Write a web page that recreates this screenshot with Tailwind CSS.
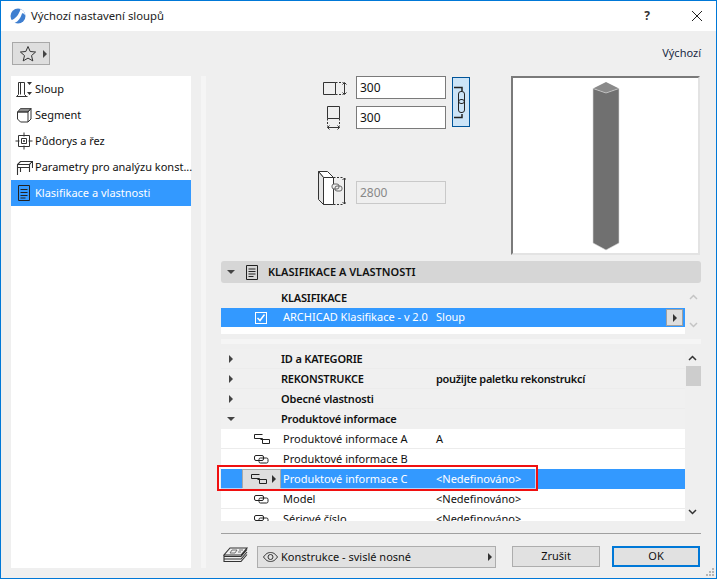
<!DOCTYPE html>
<html lang="en">
<head>
<meta charset="UTF-8">
<script src="https://cdn.jsdelivr.net/npm/@tailwindcss/browser@4"></script>
<title>Výchozí nastavení sloupů</title>
</head>
<body class="overflow-hidden">
<div class="relative w-[717px] h-[579px] flex flex-col border border-[#0078d7] bg-[#efefef] font-['Noto_Sans','Liberation_Sans',sans-serif] text-[11px] text-[#111]">

  <!-- title bar -->
  <div class="h-[30px] bg-white flex items-center shrink-0">
    <svg class="ml-[9px] w-[16px] h-[16px]" viewBox="0 0 16 16"><circle cx="8" cy="8" r="7.500" fill="#3f7fd0"/><path d="M1 12.500C5 11 9 7 10.500 1c2.500 1 4.500 3 4.800 6.500C14 5.500 13 5 12 5.500c-1 3.500-3.500 8-7.500 9.500C3 14.500 2 13.500 1 12.500z" fill="#fff"/></svg>
    <span class="ml-[5px] text-[11.3px] text-[#222]">Výchozí nastavení sloupů</span>
    <span class="ml-auto mr-[41px] text-[12px] font-bold text-[#333]">?</span>
    <svg class="mr-[13px] w-[12px] h-[12px]" viewBox="0 0 12 12"><path d="M1 1l10 10M11 1L1 11" stroke="#222" stroke-width="1" fill="none"/></svg>
  </div>

  <!-- toolbar -->
  <div class="h-[45px] flex items-center justify-between pl-[11px] pr-[15px] shrink-0">
    <div class="w-[38px] h-[23px] bg-[#dedede] border border-[#a8a8a8] flex items-center pl-[6px] gap-[6px]">
      <svg class="w-[18px] h-[18px]" viewBox="0 0 18 18"><path d="M9 1.500l2.200 5 5.400.5-4.100 3.600 1.300 5.300L9 13.100l-4.800 2.800 1.300-5.300L1.400 7l5.400-.5z" fill="none" stroke="#333" stroke-width="1"/></svg>
      <span class="w-0 h-0 border-y-[4px] border-y-transparent border-l-[4px] border-l-[#444]"></span>
    </div>
    <span class="text-[#1a2a44]">Výchozí</span>
  </div>

  <div class="flex flex-1 min-h-0 pl-[10px] pr-[15px] pb-[10px]">
    <!-- left list -->
    <div class="w-[180px] h-[492px] bg-white shrink-0">
      <div class="h-[26px] flex items-center">
        <svg class="ml-[4px] w-[18px] h-[18px] shrink-0" viewBox="0 0 18 18" fill="none" stroke="#333"><path d="M3.500 14.500V2.500h6v12M5.500 2.500v12M1.500 16.500h11M3.500 14.500l-2 2M9.500 14.500l2 2"/><path d="M12 2h5l-2.500 3zM12 12h5l-2.500 3z" fill="#333" stroke="none"/></svg>
        <span class="ml-[2px]">Sloup</span>
      </div>
      <div class="h-[26px] flex items-center">
        <svg class="ml-[4px] w-[18px] h-[18px] shrink-0" viewBox="0 0 18 18" fill="none" stroke="#333"><path d="M2.500 6l3-3.500h10.500L13 6z" fill="#8c8c8c" stroke-width=".8"/><path d="M2.500 6H13v10H5.500l-3-3zM13 6l3-3.500V13l-3 3"/></svg>
        <span class="ml-[2px]">Segment</span>
      </div>
      <div class="h-[26px] flex items-center">
        <svg class="ml-[4px] w-[18px] h-[18px] shrink-0" viewBox="0 0 18 18" fill="none" stroke="#333"><path d="M3.500 3.500h11v11h-11zM6.500 6.500h5v5h-5zM9 .5v4M9 13.500v4M.5 9h4M13.500 9h4M9 8v2M8 9h2"/></svg>
        <span class="ml-[2px]">Půdorys a řez</span>
      </div>
      <div class="h-[26px] flex items-center">
        <svg class="ml-[4px] w-[18px] h-[18px] shrink-0" viewBox="0 0 18 18" fill="none" stroke="#333"><path d="M2.500 17V6.500l3-3h12l-3 3h-12M14.500 6.500V14M2.500 9.500h12M5.500 9.500V14M17.500 3.500V10" stroke-width="1.100"/></svg>
        <span class="ml-[2px] whitespace-nowrap">Parametry pro analýzu konst...</span>
      </div>
      <div class="h-[26px] flex items-center bg-[#3399ff] text-white">
        <svg class="ml-[6px] w-[14px] h-[18px] shrink-0" viewBox="0 0 14 18" fill="none" stroke="#222"><path d="M1.500 1.500h11v15h-11zM3.500 5.500h7M3.500 8.500h7M3.500 11.500h7M3.500 14h5"/></svg>
        <span class="ml-[4px]">Klasifikace a vlastnosti</span>
      </div>
    </div>

    <!-- splitter -->
    <div class="w-[5px] h-[492px] bg-[#f5f5f5] ml-[10px] mr-[15px] shrink-0"></div>

    <!-- right column -->
    <div class="w-[480px] flex flex-col">
      <!-- geometry + preview -->
      <div class="h-[179px] flex shrink-0">
        <div class="w-[225px] shrink-0 flex flex-col items-end">
          <div class="h-[23px] flex items-center">
            <svg class="mr-[9px] w-[24px] h-[16px]" viewBox="0 0 24 16" fill="none" stroke="#333"><path d="M.5 2.500h12v12H.5z"/><path d="M12.500 2.500h8M12.500 14.500h8" stroke-dasharray="2 1.500"/><path d="M21.500 3v11M19.500 4.500l2-2 2 2M19.500 12.500l2 2 2-2"/></svg>
            <div class="w-[90px] h-[23px] bg-white border border-[#7a7a7a] pl-[3px] flex items-center text-[12px] text-[#111]">300</div>
          </div>
          <div class="h-[23px] mt-[7px] flex items-center">
            <svg class="mr-[16px] w-[14px] h-[24px]" viewBox="0 0 14 24" fill="none" stroke="#333"><path d="M1.500 .5h12v12h-12z"/><path d="M1.500 12.500v8M13.500 12.500v8" stroke-dasharray="2 1.500"/><path d="M1.500 21.500h12M3.500 19.500l-2 2 2 2M11.500 19.500l2 2-2 2"/></svg>
            <div class="w-[90px] h-[23px] bg-white border border-[#7a7a7a] pl-[3px] flex items-center text-[12px] text-[#111]">300</div>
          </div>
          <div class="h-[23px] mt-[52px] flex items-center">
            <svg class="mr-[10px] w-[29px] h-[34px] -mt-[10px]" viewBox="0 0 29 34" fill="none" stroke="#333"><path d="M1.500 .5h9l6 6h-10z" fill="#fff"/><path d="M6.500 6.500h10v27h-10z" fill="#fff"/><path d="M1.500 .5v28l5 5v-27z" fill="#e4e4e4"/><path d="M16.500 6.500h10M16.500 33.500h10" stroke-dasharray="2 1.500"/><path d="M27.500 7v26M25.500 9l2-2 2 2M25.500 31l2 2 2-2"/><rect x="15" y="13" width="7" height="5" rx="2" stroke="#666" fill="#eee"/><rect x="18" y="15" width="7" height="5" rx="2" stroke="#666"/></svg>
            <div class="w-[90px] h-[23px] bg-[#efefef] border border-[#c9c9c9] pl-[3px] flex items-center text-[12px] text-[#888]">2800</div>
          </div>
        </div>
        <div class="w-[18px] h-[50px] mt-px ml-[6px] bg-[#cce4f7] border border-[#005499] shrink-0">
          <svg class="w-[16px] h-[48px]" viewBox="0 0 16 48" fill="none" stroke="#222"><path d="M1 9.500h8V13M1 39.500h8V36" stroke-width="1.500"/><rect x="5.500" y="13.500" width="6" height="12" rx="2.500"/><rect x="5.500" y="21.500" width="6" height="13" rx="2.500"/></svg>
        </div>
        <div class="ml-[41px] w-[189px] h-[179px] bg-white border-2 border-[#e3e3e3] border-t-[#7a7a7a] border-l-[#7a7a7a] flex justify-center items-start shrink-0">
          <svg class="mt-[3px] w-[28px] h-[170px]" viewBox="0 0 28 170"><path d="M1 7.500L14 1l13 6.500L14 12z" fill="#8a8a8a"/><path d="M1 7.500L14 12l13-4.500V162l-13 7-13-7z" fill="#707070" stroke="#d8d8d8" stroke-width=".6"/></svg>
        </div>
      </div>

      <!-- section header -->
      <div class="mt-[6px] h-[22px] bg-[#d6d6d6] rounded-[3px] flex items-center shrink-0">
        <span class="ml-[6px] w-0 h-0 border-x-[4px] border-x-transparent border-t-[4px] border-t-[#444]"></span>
        <svg class="ml-[11px] w-[12px] h-[15px]" viewBox="0 0 12 15" fill="none" stroke="#222"><path d="M.5 .5h11v14H.5zM2.500 4h7M2.500 6.500h7M2.500 9h7M2.500 11.500h5"/></svg>
        <span class="ml-[10px] font-semibold">KLASIFIKACE A VLASTNOSTI</span>
      </div>

      <!-- classification list -->
      <div class="mt-[5px] h-[46px] flex shrink-0">
        <div class="w-[464px]">
          <div class="h-[20px] flex items-center pl-[60px] font-semibold tracking-[-0.2px]">KLASIFIKACE</div>
          <div class="h-[19px] bg-[#3399ff] text-white flex items-center relative whitespace-nowrap">
            <span class="ml-[34px] w-[12px] h-[12px] border border-white flex items-center justify-center shrink-0">
              <svg class="w-[10px] h-[10px]" viewBox="0 0 10 10" fill="none" stroke="#fff" stroke-width="1.500"><path d="M1.500 5l2.500 2.500 4.500-6"/></svg>
            </span>
            <span class="ml-[16px] w-[153px] shrink-0">ARCHICAD Klasifikace - v 2.0</span>
            <span>Sloup</span>
            <span class="absolute right-[2px] top-px w-[17px] h-[17px] bg-[#dedede] border border-[#a0a0a0] flex items-center justify-center">
              <span class="w-0 h-0 border-y-[4px] border-y-transparent border-l-[4px] border-l-[#333]"></span>
            </span>
          </div>
          <div class="h-[7px] bg-white"></div>
        </div>
        <div class="w-[16px] flex flex-col justify-between items-center py-[6px]">
          <svg class="w-[9px] h-[6px]" viewBox="0 0 9 6" fill="none" stroke="#c4c4c4" stroke-width="1.500"><path d="M1 5l3.500-3.500L8 5"/></svg>
          <svg class="w-[9px] h-[6px]" viewBox="0 0 9 6" fill="none" stroke="#c4c4c4" stroke-width="1.500"><path d="M1 1l3.500 3.500L8 1"/></svg>
        </div>
      </div>

      <div class="mt-[5px] h-[5px] bg-[#f5f5f5] shrink-0"></div>

      <!-- properties list -->
      <div class="mt-[5px] h-[172px] flex shrink-0">
        <div class="w-[464px] overflow-hidden whitespace-nowrap">
          <div class="h-[20px] bg-[#f0f0f0] shadow-[inset_0_-1px_0_#ececec] flex items-center font-semibold tracking-[-0.2px]">
            <span class="ml-[8px] w-0 h-0 border-y-[4px] border-y-transparent border-l-[4px] border-l-[#444]"></span>
            <span class="ml-[48px]">ID a KATEGORIE</span>
          </div>
          <div class="h-[20px] bg-[#f0f0f0] shadow-[inset_0_-1px_0_#ececec] flex items-center font-semibold tracking-[-0.2px]">
            <span class="ml-[8px] w-0 h-0 border-y-[4px] border-y-transparent border-l-[4px] border-l-[#444]"></span>
            <span class="ml-[48px] w-[155px]">REKONSTRUKCE</span>
            <span class="tracking-[-0.3px]">použijte paletku rekonstrukcí</span>
          </div>
          <div class="h-[20px] bg-[#f0f0f0] shadow-[inset_0_-1px_0_#ececec] flex items-center font-semibold tracking-[-0.2px]">
            <span class="ml-[8px] w-0 h-0 border-y-[4px] border-y-transparent border-l-[4px] border-l-[#444]"></span>
            <span class="ml-[48px]">Obecné vlastnosti</span>
          </div>
          <div class="h-[20px] bg-[#f0f0f0] flex items-center font-semibold tracking-[-0.2px]">
            <span class="ml-[6px] w-0 h-0 border-x-[4px] border-x-transparent border-t-[4px] border-t-[#444]"></span>
            <span class="ml-[46px]">Produktové informace</span>
          </div>
          <div class="h-[20px] bg-white shadow-[inset_0_-1px_0_#ececec] flex items-center">
            <svg class="ml-[32px] w-[18px] h-[12px]" viewBox="0 0 18 12" fill="none" stroke="#222"><path d="M9.500 1.500H1.500v4h8v5h7v-4h-9"/></svg>
            <span class="ml-[12px] w-[153px]">Produktové informace A</span><span>A</span>
          </div>
          <div class="h-[20px] bg-white flex items-center">
            <svg class="ml-[33px] w-[15px] h-[10px]" viewBox="0 0 15 10" fill="none" stroke="#222"><rect x=".5" y="1.500" width="9" height="5" rx="1.500"/><rect x="5" y="4" width="9" height="5" rx="1.500"/></svg>
            <span class="ml-[14px] w-[153px]">Produktové informace B</span>
          </div>
          <div class="h-[20px] bg-[#3399ff] text-white flex items-center">
            <div class="ml-[21px] w-[39px] h-[20px] bg-[#dedede] border border-[#a8a8a8] flex items-center shrink-0">
              <svg class="ml-[7px] w-[18px] h-[12px]" viewBox="0 0 18 12" fill="none" stroke="#222"><path d="M9.500 1.500H1.500v4h8v5h7v-4h-9"/></svg>
              <span class="ml-[4px] w-0 h-0 border-y-[4px] border-y-transparent border-l-[4px] border-l-[#333]"></span>
            </div>
            <span class="ml-[2px] w-[153px]">Produktové informace C</span><span>&lt;Nedefinováno&gt;</span>
          </div>
          <div class="h-[20px] bg-white shadow-[inset_0_-1px_0_#ececec] flex items-center">
            <svg class="ml-[33px] w-[15px] h-[10px]" viewBox="0 0 15 10" fill="none" stroke="#222"><rect x=".5" y="1.500" width="9" height="5" rx="1.500"/><rect x="5" y="4" width="9" height="5" rx="1.500"/></svg>
            <span class="ml-[14px] w-[153px]">Model</span><span>&lt;Nedefinováno&gt;</span>
          </div>
          <div class="h-[20px] bg-white flex items-center">
            <svg class="ml-[33px] w-[15px] h-[10px]" viewBox="0 0 15 10" fill="none" stroke="#222"><rect x=".5" y="1.500" width="9" height="5" rx="1.500"/><rect x="5" y="4" width="9" height="5" rx="1.500"/></svg>
            <span class="ml-[14px] w-[153px]">Sériové číslo</span><span>&lt;Nedefinováno&gt;</span>
          </div>
        </div>
        <div class="w-[16px] relative">
          <svg class="absolute left-[3px] top-[6px] w-[9px] h-[6px]" viewBox="0 0 9 6" fill="none" stroke="#333" stroke-width="1.500"><path d="M1 5l3.500-3.500L8 5"/></svg>
          <div class="absolute left-px top-[17px] w-[15px] h-[20px] bg-[#cdcdcd]"></div>
          <svg class="absolute left-[3px] bottom-[6px] w-[9px] h-[6px]" viewBox="0 0 9 6" fill="none" stroke="#333" stroke-width="1.500"><path d="M1 1l3.500 3.500L8 1"/></svg>
        </div>
      </div>

      <!-- footer -->
      <div class="mt-[12px] border-t border-[#a0a0a0] pt-[12px] flex items-start shrink-0">
        <svg class="ml-[2px] mt-[1px] w-[25px] h-[17px]" viewBox="0 0 25 17" fill="none" stroke="#333"><path d="M7 1h17l-6 7H1zM1 8v1.500h17l6-7M1 10v2h17l6-7M1 12.500v2h17l6-7" stroke-width="1.100"/><path d="M9 3h5l-2 3H7zM16 3h4M15 5h3" stroke="#555" stroke-width=".8"/></svg>
        <div class="ml-[9px] w-[239px] h-[22px] bg-[#e1e1e1] border border-[#adadad] flex items-center">
          <svg class="ml-[5px] w-[15px] h-[10px]" viewBox="0 0 15 10" fill="none" stroke="#333"><path d="M.5 5C3 1.500 5 .5 7.500 .5S12 1.500 14.500 5C12 8.500 10 9.500 7.500 9.500S3 8.500 .5 5z"/><circle cx="7.500" cy="5" r="2.500"/></svg>
          <span class="ml-[3px] text-[#111]">Konstrukce - svislé nosné</span>
          <span class="ml-auto mr-[3px] w-0 h-0 border-y-[4px] border-y-transparent border-l-[4px] border-l-[#333]"></span>
        </div>
        <div class="ml-[16px] w-[88px] h-[21px] bg-[#e1e1e1] border border-[#adadad] flex items-center justify-center">Zrušit</div>
        <div class="ml-[12px] w-[88px] h-[21px] bg-[#e1e1e1] border-2 border-[#0078d7] flex items-center justify-center">OK</div>
      </div>
    </div>
  </div>

  <!-- callout on the selected row -->
  <div class="absolute left-[216px] top-[464px] w-[321px] h-[26px] border-[2px] border-[#f01010] shadow-[inset_0_0_0_1px_rgba(255,255,255,0.6)] pointer-events-none"></div>

  <!-- resize grip -->
  <div class="absolute right-[2px] bottom-[2px] grid grid-cols-3 gap-px">
    <span></span><span></span><span class="w-[2px] h-[2px] bg-[#b5b5b5]"></span>
    <span></span><span class="w-[2px] h-[2px] bg-[#b5b5b5]"></span><span class="w-[2px] h-[2px] bg-[#b5b5b5]"></span>
    <span class="w-[2px] h-[2px] bg-[#b5b5b5]"></span><span class="w-[2px] h-[2px] bg-[#b5b5b5]"></span><span class="w-[2px] h-[2px] bg-[#b5b5b5]"></span>
  </div>
</div>
</body>
</html>
